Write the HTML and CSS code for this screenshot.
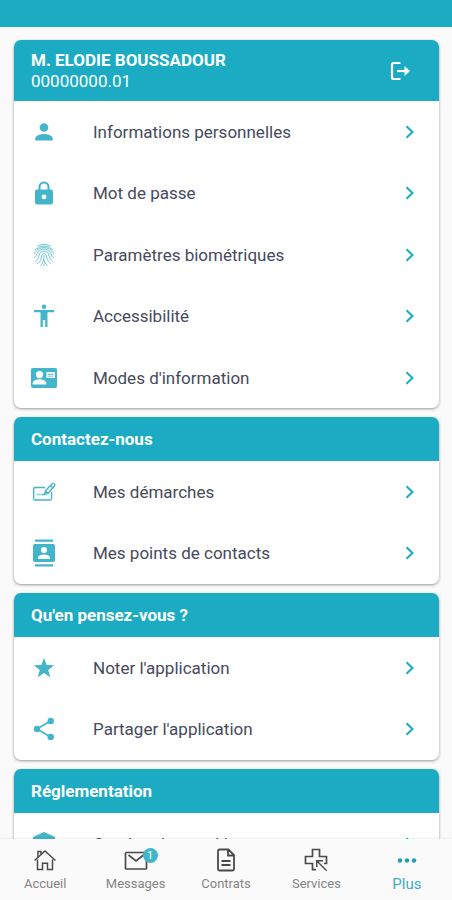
FILE: index.html
```html
<!DOCTYPE html>
<html lang="fr">
<head>
<meta charset="utf-8">
<meta name="viewport" content="width=device-width, initial-scale=1">
<title>Plus</title>
<link rel="stylesheet" href="styles.css">
</head>
<body>
<svg class="defs" aria-hidden="true">
  <symbol id="chevron" viewBox="0 0 24 24"><path d="M9.500 6.200 15.500 12l-6 5.800" fill="none" stroke="currentColor" stroke-width="2"/></symbol>
</svg>
<div class="app">
  <header class="status"></header>
  <main class="content">
    <section class="card">
      <div class="card-head profile">
        <div>
          <h1 class="name">M. ELODIE BOUSSADOUR</h1>
          <p class="number">00000000.01</p>
        </div>
        <button class="logout" type="button" aria-label="Se déconnecter">
          <svg class="icon" viewBox="0 0 24 24" fill="none" stroke="currentColor" stroke-width="2.200"><path d="M12.500 4H5.500Q4 4 4 5.500v13Q4 20 5.500 20h7"/><path d="M9 12h9"/><path d="M16.500 7l5.500 5-5.500 5z" fill="currentColor" stroke="none"/></svg>
        </button>
      </div>
      <ul class="list">
        <li><a class="row" href="#infos">
          <svg class="icon" viewBox="0 0 24 24" fill="currentColor"><circle cx="12" cy="7.500" r="4.300"/><path d="M3.300 20.500v-2.300c0-2.900 5.700-4.300 8.700-4.300s8.700 1.400 8.700 4.300v2.300z"/></svg>
          <span>Informations personnelles</span><svg class="chevron"><use href="#chevron"/></svg></a></li>
        <li><a class="row" href="#password">
          <svg class="icon" viewBox="0 0 24 24" fill="currentColor" fill-rule="evenodd"><path d="M18.800 8.500H17.600V6a5.600 5.600 0 0 0-11.200 0v2.500H5.200A2.200 2.200 0 0 0 3 10.700v10.600a2.200 2.200 0 0 0 2.200 2.200h13.600a2.200 2.200 0 0 0 2.200-2.200V10.700a2.200 2.200 0 0 0-2.200-2.200zM8.500 6a3.500 3.500 0 0 1 7 0v2.500h-7zM12 13.500a2.400 2.400 0 1 1 0 4.800 2.400 2.400 0 0 1 0-4.800z"/></svg>
          <span>Mot de passe</span><svg class="chevron"><use href="#chevron"/></svg></a></li>
        <li><a class="row" href="#biometrie">
          <svg class="icon" viewBox="0 0 24 24" fill="none" stroke="currentColor" stroke-width=".8" stroke-linecap="round"><path d="M6 2.800q6-3.200 12 0M3.500 6.500q8.500-7.300 17 0M2.500 10.500c3.500-8 15.500-8 19 0M2.500 14.500c1.600-1.200 1.800-2.300 2.500-4 3-6 11-6 14 0 .8 2 .8 3.500 2.400 4M3.500 18c3.500-2 3-5 4.200-7.200 1.900-3.700 6.700-3.700 8.600 0 1 2.200 1 5.200 4 7.200M5.500 20.500c4-2.500 3.500-6 4.500-8.500.9-2 3.100-2 4 0 1 2.700 1 6 4.500 8.500M8.500 22.500c3-2.800 3.500-6 3.500-10M12 17c.4 2.300 1.500 4 3.300 5.500M11 23q1.200-1.300 1.500-2"/></svg>
          <span>Paramètres biométriques</span><svg class="chevron"><use href="#chevron"/></svg></a></li>
        <li><a class="row" href="#accessibilite">
          <svg class="icon" viewBox="0 0 24 24" fill="currentColor"><circle cx="12" cy="2.700" r="2.200"/><path d="M2 6h20v2.200h-6.500V23h-2.300v-7h-2.400v7H8.500V8.200H2z"/></svg>
          <span>Accessibilité</span><svg class="chevron"><use href="#chevron"/></svg></a></li>
        <li><a class="row" href="#modes">
          <svg class="icon wide" viewBox="0 0 28 24" fill="currentColor"><rect x="1" y="2" width="26" height="20" rx="2"/><g fill="#fff"><circle cx="9.500" cy="8.600" r="3.600"/><path d="M2.700 18.500v-1.200c0-2.700 4.400-4 6.800-4s6.800 1.300 6.800 4v1.200z"/><path d="M16.500 6h8.500v6h-8.500z"/></g><path d="M18 7.700h5.500v1H18zM18 9.700h5.500v.8H18z"/></svg>
          <span>Modes d'information</span><svg class="chevron"><use href="#chevron"/></svg></a></li>
      </ul>
    </section>
    <section class="card">
      <h2 class="card-head">Contactez-nous</h2>
      <ul class="list">
        <li><a class="row" href="#demarches">
          <svg class="icon" viewBox="0 0 24 24" fill="none" stroke="currentColor" stroke-width="1.300" stroke-linejoin="round"><path d="M13 7.500H3Q1.700 7.500 1.700 8.800v9.900Q1.700 20 3 20h15q1.600 0 1.600-1.500V12"/><path d="m12.500 14.500 1-3.700 6.700-7q1.200-.8 2.100.2t.1 2L16 13.500zM18.500 5.300l2.300 2.500M13.500 10.800 16 13.500"/><path d="M5 14.500h1.300m1 0h1.300m1 0h3"/></svg>
          <span>Mes démarches</span><svg class="chevron"><use href="#chevron"/></svg></a></li>
        <li><a class="row" href="#contacts">
          <svg class="icon tall" viewBox="0 0 24 28" fill="currentColor"><path d="M3 .5h18v2.200H3zM3 25.300h18v2.200H3z"/><rect x="1" y="5" width="22" height="18" rx="1.800"/><g fill="#fff"><circle cx="12" cy="11" r="3"/><path d="M6 20v-1.200c0-2.200 4-3.300 6-3.300s6 1.100 6 3.300V20z"/></g></svg>
          <span>Mes points de contacts</span><svg class="chevron"><use href="#chevron"/></svg></a></li>
      </ul>
    </section>
    <section class="card">
      <h2 class="card-head">Qu'en pensez-vous ?</h2>
      <ul class="list">
        <li><a class="row" href="#noter">
          <svg class="icon" viewBox="0 0 24 24" fill="currentColor"><path d="m12 1.700 2.600 7.200 7.600.3-6 4.700 2.100 7.400L12 17.100l-6.300 4.200 2.100-7.400-6-4.700 7.600-.3z"/></svg>
          <span>Noter l'application</span><svg class="chevron"><use href="#chevron"/></svg></a></li>
        <li><a class="row" href="#partager">
          <svg class="icon" viewBox="0 0 24 24" fill="currentColor"><path d="M18.500 4 5 12l13.500 8" fill="none" stroke="currentColor" stroke-width="1.700"/><circle cx="18.700" cy="4" r="3.200"/><circle cx="5" cy="12" r="3.200"/><circle cx="18.700" cy="20" r="3.200"/></svg>
          <span>Partager l'application</span><svg class="chevron"><use href="#chevron"/></svg></a></li>
      </ul>
    </section>
    <section class="card">
      <h2 class="card-head">Réglementation</h2>
      <ul class="list">
        <li><a class="row" href="#cookies">
          <svg class="icon" viewBox="0 0 24 24" fill="currentColor"><path d="M12 0 23 5v7c0 6-5 10-11 12C6 22 1 18 1 12V5z"/></svg>
          <span>Gestion des cookies</span><svg class="chevron"><use href="#chevron"/></svg></a></li>
      </ul>
    </section>
  </main>
  <nav class="tabs">
    <a class="tab" href="#accueil">
      <svg class="icon" viewBox="0 0 24 24" fill="none" stroke="currentColor" stroke-width="1.500"><path d="M1.500 12.500 12 3l10.500 9.500M4.500 11.500v10h5v-6.300h5v6.300h5v-10"/><path d="M5 9V3.500h3v2.800"/></svg>
      Accueil</a>
    <a class="tab" href="#messages">
      <span class="badge-wrap"><svg class="icon" viewBox="0 0 24 24" fill="none" stroke="currentColor" stroke-width="1.700"><rect x="1.500" y="4.500" width="21" height="16.500" rx="1"/><path d="m4.500 7 7.500 6 7.500-6"/></svg><span class="badge">1</span></span>
      Messages</a>
    <a class="tab" href="#contrats">
      <svg class="icon" viewBox="0 0 24 24" fill="none" stroke="currentColor" stroke-width="1.800"><path d="M14.500 1.500H5.500Q4 1.500 4 3v18q0 1.500 1.500 1.500h13Q20 22.500 20 21V7zM14 2v5.500h6M7.500 13h9M7.500 17h9"/></svg>
      Contrats</a>
    <a class="tab" href="#services">
      <svg class="icon" viewBox="0 0 24 24" fill="none" stroke="currentColor" stroke-width="1.700"><path d="M12 21.700H8.500v-6.200H1.500v-7h7v-7h7v7h7v7H20"/><path d="M12.700 19v-6.300H19M12.700 12.700l10 10" stroke-width="1.400"/></svg>
      Services</a>
    <a class="tab active" href="#plus" aria-current="page">
      <svg class="icon" viewBox="0 0 24 24" fill="currentColor"><circle cx="5" cy="12.500" r="2.200"/><circle cx="12" cy="12.500" r="2.200"/><circle cx="19" cy="12.500" r="2.200"/></svg>
      Plus</a>
  </nav>
</div>
</body>
</html>
```
FILE: styles.css
```css
* { box-sizing: border-box; }

body {
  margin: 0;
  font-family: Roboto, "Liberation Sans", sans-serif;
  color: #454a5c;
  background: #fafafa;
}

h1, h2, p, ul { margin: 0; padding: 0; }
ul { list-style: none; }
a { color: inherit; text-decoration: none; }
svg { display: block; flex: none; }
.defs { position: absolute; width: 0; height: 0; }

.app { display: flex; flex-direction: column; height: 100vh; }
.status { flex: none; height: 27px; background: #1babc3; }

.content {
  flex: 1;
  min-height: 0;
  overflow: hidden;
  display: flex;
  flex-direction: column;
  gap: 9px;
  padding: 13px 13px 0 14px;
}

.card {
  flex: none;
  border-radius: 7px;
  background: #fff;
  box-shadow: 0 1px 3px rgba(0, 0, 0, .4);
}

.card-head {
  padding: 0 17px;
  border-radius: 7px 7px 0 0;
  background: #1babc3;
  color: #fff;
  font-size: 17px;
  font-weight: 700;
  line-height: 44px;
}

.profile {
  display: flex;
  align-items: center;
  justify-content: space-between;
  height: 61px;
  line-height: 21px;
}
.name { font-size: 17px; font-weight: 700; }
.number { font-size: 17px; font-weight: 400; }
.logout { padding: 0 10px; border: 0; background: none; color: #fff; }

.row {
  display: flex;
  align-items: center;
  height: 61px;
  padding: 0 18px;
  font-size: 17px;
}
.list li:nth-child(even) .row { height: 62px; }
.row span { flex: 1; margin-left: 37px; }

.icon { width: 24px; height: 24px; }
.row .icon { color: #42b5ca; }
.row .wide { width: 28px; margin: 0 -2px; }
.row .tall { height: 28px; }
.chevron { width: 24px; height: 24px; color: #1babc3; }

.tabs {
  flex: none;
  display: flex;
  height: 61px;
  background: #fafafa;
  box-shadow: 0 -1px 2px rgba(0, 0, 0, .06);
}
.tab {
  flex: 1;
  display: flex;
  flex-direction: column;
  align-items: center;
  gap: 4px;
  padding-top: 9px;
  color: #858585;
  font-size: 13px;
  line-height: 16px;
}
.tab .icon { color: #4a4a4a; }
.tab.active { color: #42acc2; font-size: 15px; }
.tab.active .icon { color: #1a9fb8; }

.badge-wrap { position: relative; }
.badge {
  position: absolute;
  top: 0;
  right: -10px;
  width: 15px;
  border-radius: 50%;
  background: #42b5ca;
  color: #fff;
  font-size: 11px;
  line-height: 15px;
  text-align: center;
}
```
